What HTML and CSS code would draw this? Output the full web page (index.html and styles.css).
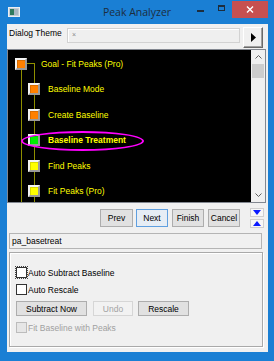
FILE: index.html
```html
<!DOCTYPE html>
<html>
<head>
<meta charset="utf-8">
<link rel="stylesheet" href="styles.css">
</head>
<body>
<div class="window">
  <div class="titlebar">
    <div class="tb-left">
      <svg class="app-icon" width="12" height="10" viewBox="0 0 12 10">
        <rect x="0.5" y="0.5" width="11" height="9" fill="#c3ccd4" stroke="#e9eef2"/>
        <rect x="2" y="2" width="4" height="6" fill="#2f7a5e"/>
        <rect x="6" y="2" width="4" height="6" fill="#a9b7c2"/>
      </svg>
    </div>
    <div class="title">Peak Analyzer</div>
    <div class="controls">
      <span class="ctl-min"></span>
      <span class="ctl-max"></span>
      <span class="ctl-close">
        <svg width="8" height="7" viewBox="0 0 8 7"><path d="M1 0.5 L7 6.5 M7 0.5 L1 6.5" stroke="#fff" stroke-width="1.4"/></svg>
      </span>
    </div>
  </div>

  <div class="client">
    <div class="theme-row">
      <span class="theme-label">Dialog Theme</span>
      <div class="theme-box">×</div>
      <button class="theme-btn">
        <svg width="5" height="9" viewBox="0 0 5 9"><path d="M0 0 L5 4.5 L0 9 Z" fill="#000"/></svg>
      </button>
    </div>

    <div class="tree-wrap">
      <div class="tree">
        <div class="node goal"><span class="box orange"></span><span class="label">Goal - Fit Peaks (Pro)</span></div>
        <div class="node child"><span class="box orange"></span><span class="label">Baseline Mode</span></div>
        <div class="node child"><span class="box orange"></span><span class="label">Create Baseline</span></div>
        <div class="node child current"><span class="box green"></span><span class="label">Baseline Treatment</span><span class="highlight"></span></div>
        <div class="node child"><span class="box yellow"></span><span class="label">Find Peaks</span></div>
        <div class="node child"><span class="box yellow"></span><span class="label">Fit Peaks (Pro)</span></div>
      </div>
      <div class="vscroll">
        <div class="sb-arrow">
          <svg width="7" height="4" viewBox="0 0 7 4"><polyline points="0.5,3.5 3.5,0.5 6.5,3.5" fill="none" stroke="#606060"/></svg>
        </div>
        <div class="sb-thumb"></div>
        <div class="sb-track"></div>
        <div class="sb-arrow">
          <svg width="7" height="4" viewBox="0 0 7 4"><polyline points="0.5,0.5 3.5,3.5 6.5,0.5" fill="none" stroke="#606060"/></svg>
        </div>
      </div>
    </div>

    <div class="nav-row">
      <button class="btn w33">Prev</button>
      <button class="btn w32 default ml3">Next</button>
      <button class="btn w32 ml4">Finish</button>
      <button class="btn w32 ml4">Cancel</button>
      <div class="arrows">
        <span class="arrow-btn"><svg width="8" height="5" viewBox="0 0 8 5"><path d="M0 0 H8 L4 5 Z" fill="#0a1aff"/></svg></span>
        <span class="arrow-btn"><svg width="8" height="5" viewBox="0 0 8 5"><path d="M0 5 H8 L4 0 Z" fill="#0a1aff"/></svg></span>
      </div>
    </div>

    <div class="page-name">pa_basetreat</div>

    <div class="group">
      <div class="check-row"><span class="cb focus"></span><span class="cb-label">Auto Subtract Baseline</span></div>
      <div class="check-row mt6"><span class="cb"></span><span class="cb-label">Auto Rescale</span></div>
      <div class="btn-row">
        <button class="btn small w71">Subtract Now</button>
        <button class="btn small w40 ml6 disabled">Undo</button>
        <button class="btn small w51 ml5">Rescale</button>
      </div>
      <div class="check-row mt6 off"><span class="cb"></span><span class="cb-label">Fit Baseline with Peaks</span></div>
    </div>
  </div>
</div>
</body>
</html>
```

FILE: styles.css
```css
html, body {
  margin: 0;
  padding: 0;
}
body {
  width: 274px;
  height: 361px;
  overflow: hidden;
  background: #1a7fd4;
  font-family: "Liberation Sans", Arial, sans-serif;
  font-size: 8.5px;
  color: #000;
}
.window {
  display: flex;
  flex-direction: column;
}

/* title bar */
.titlebar {
  height: 24px;
  display: grid;
  grid-template-columns: 1fr auto 1fr;
  align-items: start;
}
.app-icon {
  display: block;
  margin: 7px 0 0 8px;
}
.title {
  font-family: "Open Sans", "Liberation Sans", sans-serif;
  font-size: 10.5px;
  line-height: 24px;
  color: #1d2d3d;
}
.controls {
  justify-self: end;
  display: flex;
  align-items: flex-start;
}
.ctl-min {
  width: 7px;
  height: 2px;
  margin: 10px 14px 0 0;
  background: #1d2d3d;
}
.ctl-max {
  width: 7px;
  height: 6px;
  box-sizing: border-box;
  margin: 5px 7px 0 0;
  border: 1px solid #1d2d3d;
  border-top-width: 2px;
}
.ctl-close {
  width: 36px;
  height: 17px;
  margin: 1px 6px 0 0;
  background: #c75050;
  display: flex;
  align-items: center;
  justify-content: center;
}

/* client area */
.client {
  margin: 0 6px 0 7px;
  height: 328px;
  background: #f0f0f0;
  display: flex;
  flex-direction: column;
}

.theme-row {
  display: flex;
  align-items: flex-start;
  height: 21px;
  margin-top: 3px;
  padding-left: 2px;
}
.theme-label {
  width: 58px;
  line-height: 12px;
}
.theme-box {
  width: 173px;
  height: 15px;
  margin-top: 1px;
  box-sizing: border-box;
  border: 1px solid #d2d2d2;
  box-shadow: inset 1px 1px 0 #fff;
  background: #efefef;
  color: #8a8a8a;
  font-size: 7px;
  line-height: 12px;
  padding-left: 4px;
}
.theme-btn {
  width: 20px;
  height: 21px;
  margin-left: 3px;
  padding: 0;
  box-sizing: border-box;
  border: 1px solid;
  border-color: #fff #6a6a6a #6a6a6a #fff;
  box-shadow: inset -1px -1px 0 #a0a0a0;
  background: #f0f0f0;
  display: flex;
  align-items: center;
  justify-content: center;
}

/* tree */
.tree-wrap {
  display: flex;
  height: 154px;
  margin: 1px 2px 0 0;
  box-sizing: border-box;
  border: 1px solid #828790;
}
.tree {
  flex: 1;
  overflow: hidden;
  padding-top: 1px;
  background:
    linear-gradient(#8f8f00, #8f8f00) 13px 19px / 1px 100% no-repeat,
    linear-gradient(#8f8f00, #8f8f00) 26px 13px / 1px 100% no-repeat,
    linear-gradient(#8f8f00, #8f8f00) 19px 13px / 8px 1px no-repeat,
    #000;
}
.node {
  position: relative;
  height: 25.5px;
  display: flex;
  align-items: center;
  color: #ffff00;
}
.node.goal { padding-left: 7px; }
.node.goal .label { margin-left: 14px; }
.node.child { padding-left: 20px; }
.node.child .label { margin-left: 8px; }
.node.current .label { font-weight: bold; }
.box {
  width: 12px;
  height: 12px;
  box-sizing: border-box;
  border: 2px solid;
  border-color: #f4f4f4 #9a9a9a #9a9a9a #f4f4f4;
  box-shadow: inset 1px 1px 0 rgba(0,0,0,0.15);
}
.box.orange { background: #ff8000; }
.box.green { background: #00ee00; }
.box.yellow { background: #ffff00; }
.highlight {
  position: absolute;
  left: 13px;
  top: 3.5px;
  width: 123px;
  height: 20px;
  box-sizing: border-box;
  border: 2px solid #ff00ff;
  border-radius: 50%;
}

.vscroll {
  width: 14px;
  background: #f0f0f0;
  display: flex;
  flex-direction: column;
  align-items: center;
}
.sb-arrow {
  height: 14px;
  display: flex;
  align-items: center;
  justify-content: center;
}
.sb-thumb {
  width: 12px;
  height: 14px;
  background: #cdcdcd;
}
.sb-track { flex: 1; }

/* nav buttons */
.nav-row {
  display: flex;
  align-items: flex-start;
  height: 18px;
  margin-top: 6px;
  padding-left: 93px;
}
.btn {
  height: 18px;
  padding: 0;
  box-sizing: border-box;
  border: 1px solid #adadad;
  background: #e1e1e1;
  font-family: "Liberation Sans", Arial, sans-serif;
  font-size: 8.5px;
  color: #000;
}
.btn.small { height: 15px; }
.btn.default {
  border-color: #5f9fdf;
  background: #e6edf5;
}
.btn.disabled {
  border-color: #d6d6d6;
  background: #f2f2f2;
  color: #a3a3a3;
}
.w33 { width: 33px; }
.w32 { width: 32px; }
.w71 { width: 71px; }
.w40 { width: 40px; }
.w51 { width: 51px; }
.ml3 { margin-left: 3px; }
.ml4 { margin-left: 4px; }
.ml5 { margin-left: 5px; }
.ml6 { margin-left: 6px; }
.mt6 { margin-top: 6px; }

.arrows {
  display: flex;
  flex-direction: column;
  gap: 2px;
  margin: -1px 0 0 10px;
}
.arrow-btn {
  width: 14px;
  height: 9px;
  box-sizing: border-box;
  border: 1px solid #cfcfcf;
  background: #f7f7f7;
  display: flex;
  align-items: center;
  justify-content: center;
}

.page-name {
  height: 16px;
  margin: 6px 6px 0 2px;
  box-sizing: border-box;
  border: 1px solid #b4b4b4;
  background: #f0f0f0;
  line-height: 14px;
  padding-left: 2px;
}

/* group */
.group {
  height: 95px;
  margin: 3px 5px 0 2px;
  box-sizing: border-box;
  border: 1px solid #a9a9a9;
  box-shadow: inset 1px 1px 0 #fff, 1px 1px 0 #fff;
  padding: 14px 0 0 6px;
}
.check-row {
  display: flex;
  align-items: center;
  height: 11px;
}
.cb {
  width: 11px;
  height: 11px;
  box-sizing: border-box;
  border: 1px solid #333;
  background: #fff;
}
.cb.focus {
  outline: 1px dotted #444;
}
.cb-label { margin-left: 1px; }
.check-row.off .cb {
  border-color: #bcbcbc;
  background: #e6e6e6;
}
.check-row.off .cb-label { color: #a0a0a0; }
.btn-row {
  display: flex;
  margin-top: 6px;
  height: 15px;
}
```
